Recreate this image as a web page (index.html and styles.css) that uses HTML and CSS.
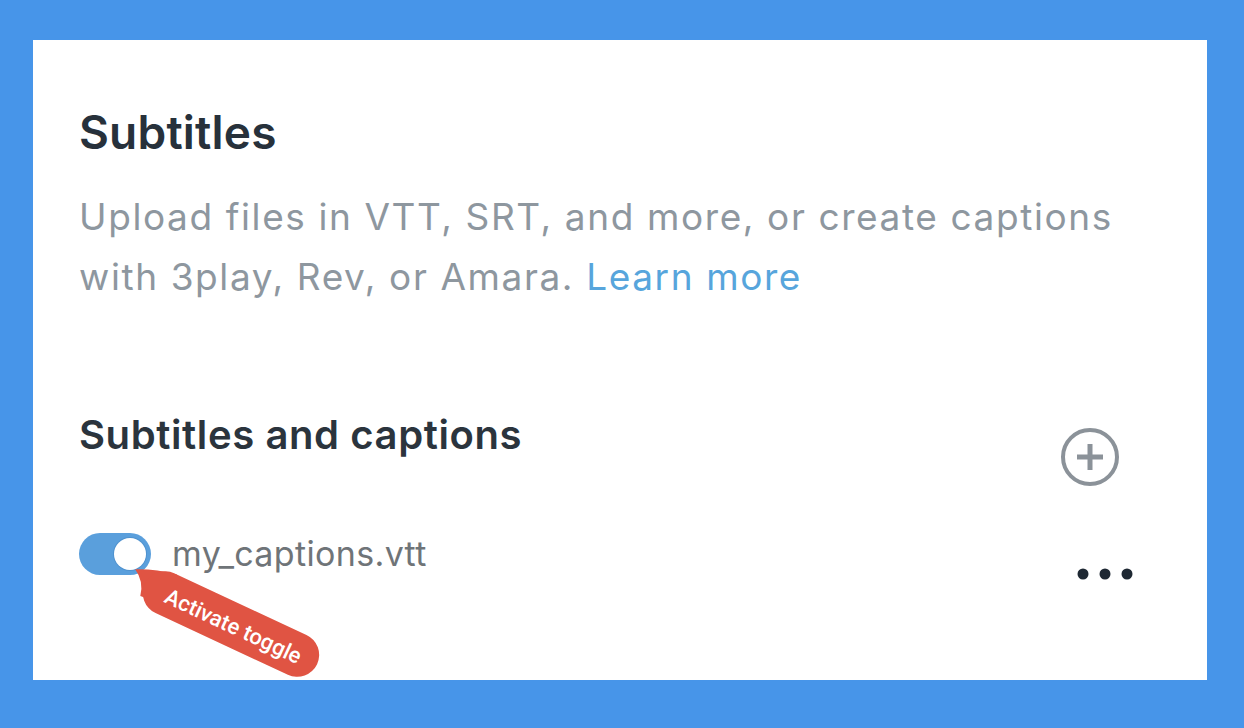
FILE: index.html
```html
<!DOCTYPE html>
<html>
<head>
    <title>Subtitles</title>
    <link rel="stylesheet" href="styles.css">
</head>
<body>
    <div class="panel">
        <h1 class="title">Subtitles</h1>
        <p class="intro">Upload files in VTT, SRT, and more, or create captions with 3play, Rev, or Amara. <a href="#" class="learn">Learn more</a></p>

        <div class="section-head">
            <h2 class="section-title">Subtitles and captions</h2>
            <button class="add-btn" aria-label="Add">
                <svg width="62" height="62" viewBox="0 0 62 62">
                    <circle cx="31" cy="31" r="27" fill="none" stroke="#8b9299" stroke-width="4"/>
                    <path d="M31 18v26M18 31h26" stroke="#8b9299" stroke-width="5"/>
                </svg>
            </button>
        </div>

        <div class="track">
            <div class="toggle"><span class="knob"></span></div>
            <span class="track-name">my_captions.vtt</span>
            <button class="more-btn" aria-label="More">
                <svg width="60" height="14" viewBox="0 0 60 14">
                    <circle cx="8" cy="7" r="5.5" fill="#1e2833"/>
                    <circle cx="30" cy="7" r="5.5" fill="#1e2833"/>
                    <circle cx="52" cy="7" r="5.5" fill="#1e2833"/>
                </svg>
            </button>
        </div>

        <svg class="callout" width="210" height="115" viewBox="0 0 210 115">
            <g transform="translate(105 58) rotate(25)">
                <path d="M-70 -22 Q-92 -18 -110 -9 Q-97 -2 -94 13 L-60 10 Z" fill="#e05443"/>
                <rect x="-95" y="-22" width="190" height="44" rx="22" fill="#e05443"/>
                <text x="3" y="1" class="callout-text" text-anchor="middle" dominant-baseline="central">Activate toggle</text>
            </g>
        </svg>
    </div>
</body>
</html>
```

FILE: styles.css
```css
body {
    margin: 0;
    background-color: #4795e9;
    font-family: Inter, "Liberation Sans", Arial, sans-serif;
}

.panel {
    position: relative;
    box-sizing: border-box;
    margin: 40px 0 0 33px;
    width: 1174px;
    height: 640px;
    padding: 64px 74px 0 46px;
    background-color: #fff;
}

.title {
    margin: 0;
    font-size: 46px;
    line-height: 56px;
    font-weight: 600;
    letter-spacing: 0.2px;
    color: #27313b;
}

.intro {
    margin: 27px 0 0 0;
    font-size: 37px;
    line-height: 60px;
    letter-spacing: 1.6px;
    color: #8e979f;
}

.learn {
    color: #57a5dc;
    text-decoration: none;
}

.section-head {
    display: flex;
    justify-content: space-between;
    align-items: flex-start;
    margin-top: 104px;
}

.section-title {
    margin: 0;
    font-size: 40px;
    line-height: 48px;
    font-weight: 600;
    letter-spacing: 0.6px;
    color: #2b343d;
}

.add-btn,
.more-btn {
    padding: 0;
    border: none;
    background: none;
    cursor: pointer;
}

.add-btn {
    margin: 15px 12px 0 0;
    width: 62px;
    height: 62px;
}

.track {
    display: flex;
    align-items: flex-start;
    margin-top: 45px;
}

.toggle {
    position: relative;
    box-sizing: border-box;
    width: 72px;
    height: 42px;
    padding: 5px;
    display: flex;
    justify-content: flex-end;
    border-radius: 21px;
    background-color: #5a9fdc;
}

.knob {
    width: 32px;
    height: 32px;
    border-radius: 50%;
    background-color: #fff;
    box-shadow: 0 0 0 1px #4f92cf;
}

.track-name {
    margin-left: 21px;
    font-size: 34px;
    line-height: 42px;
    letter-spacing: 0.35px;
    color: #6f7478;
}

.more-btn {
    margin: 34px -2px 0 auto;
    width: 60px;
    height: 14px;
}

.callout {
    position: absolute;
    left: 93px;
    top: 526px;
}

.callout-text {
    fill: #fff;
    font-family: Roboto, "Liberation Sans", sans-serif;
    font-size: 22px;
    font-weight: 500;
}
```
